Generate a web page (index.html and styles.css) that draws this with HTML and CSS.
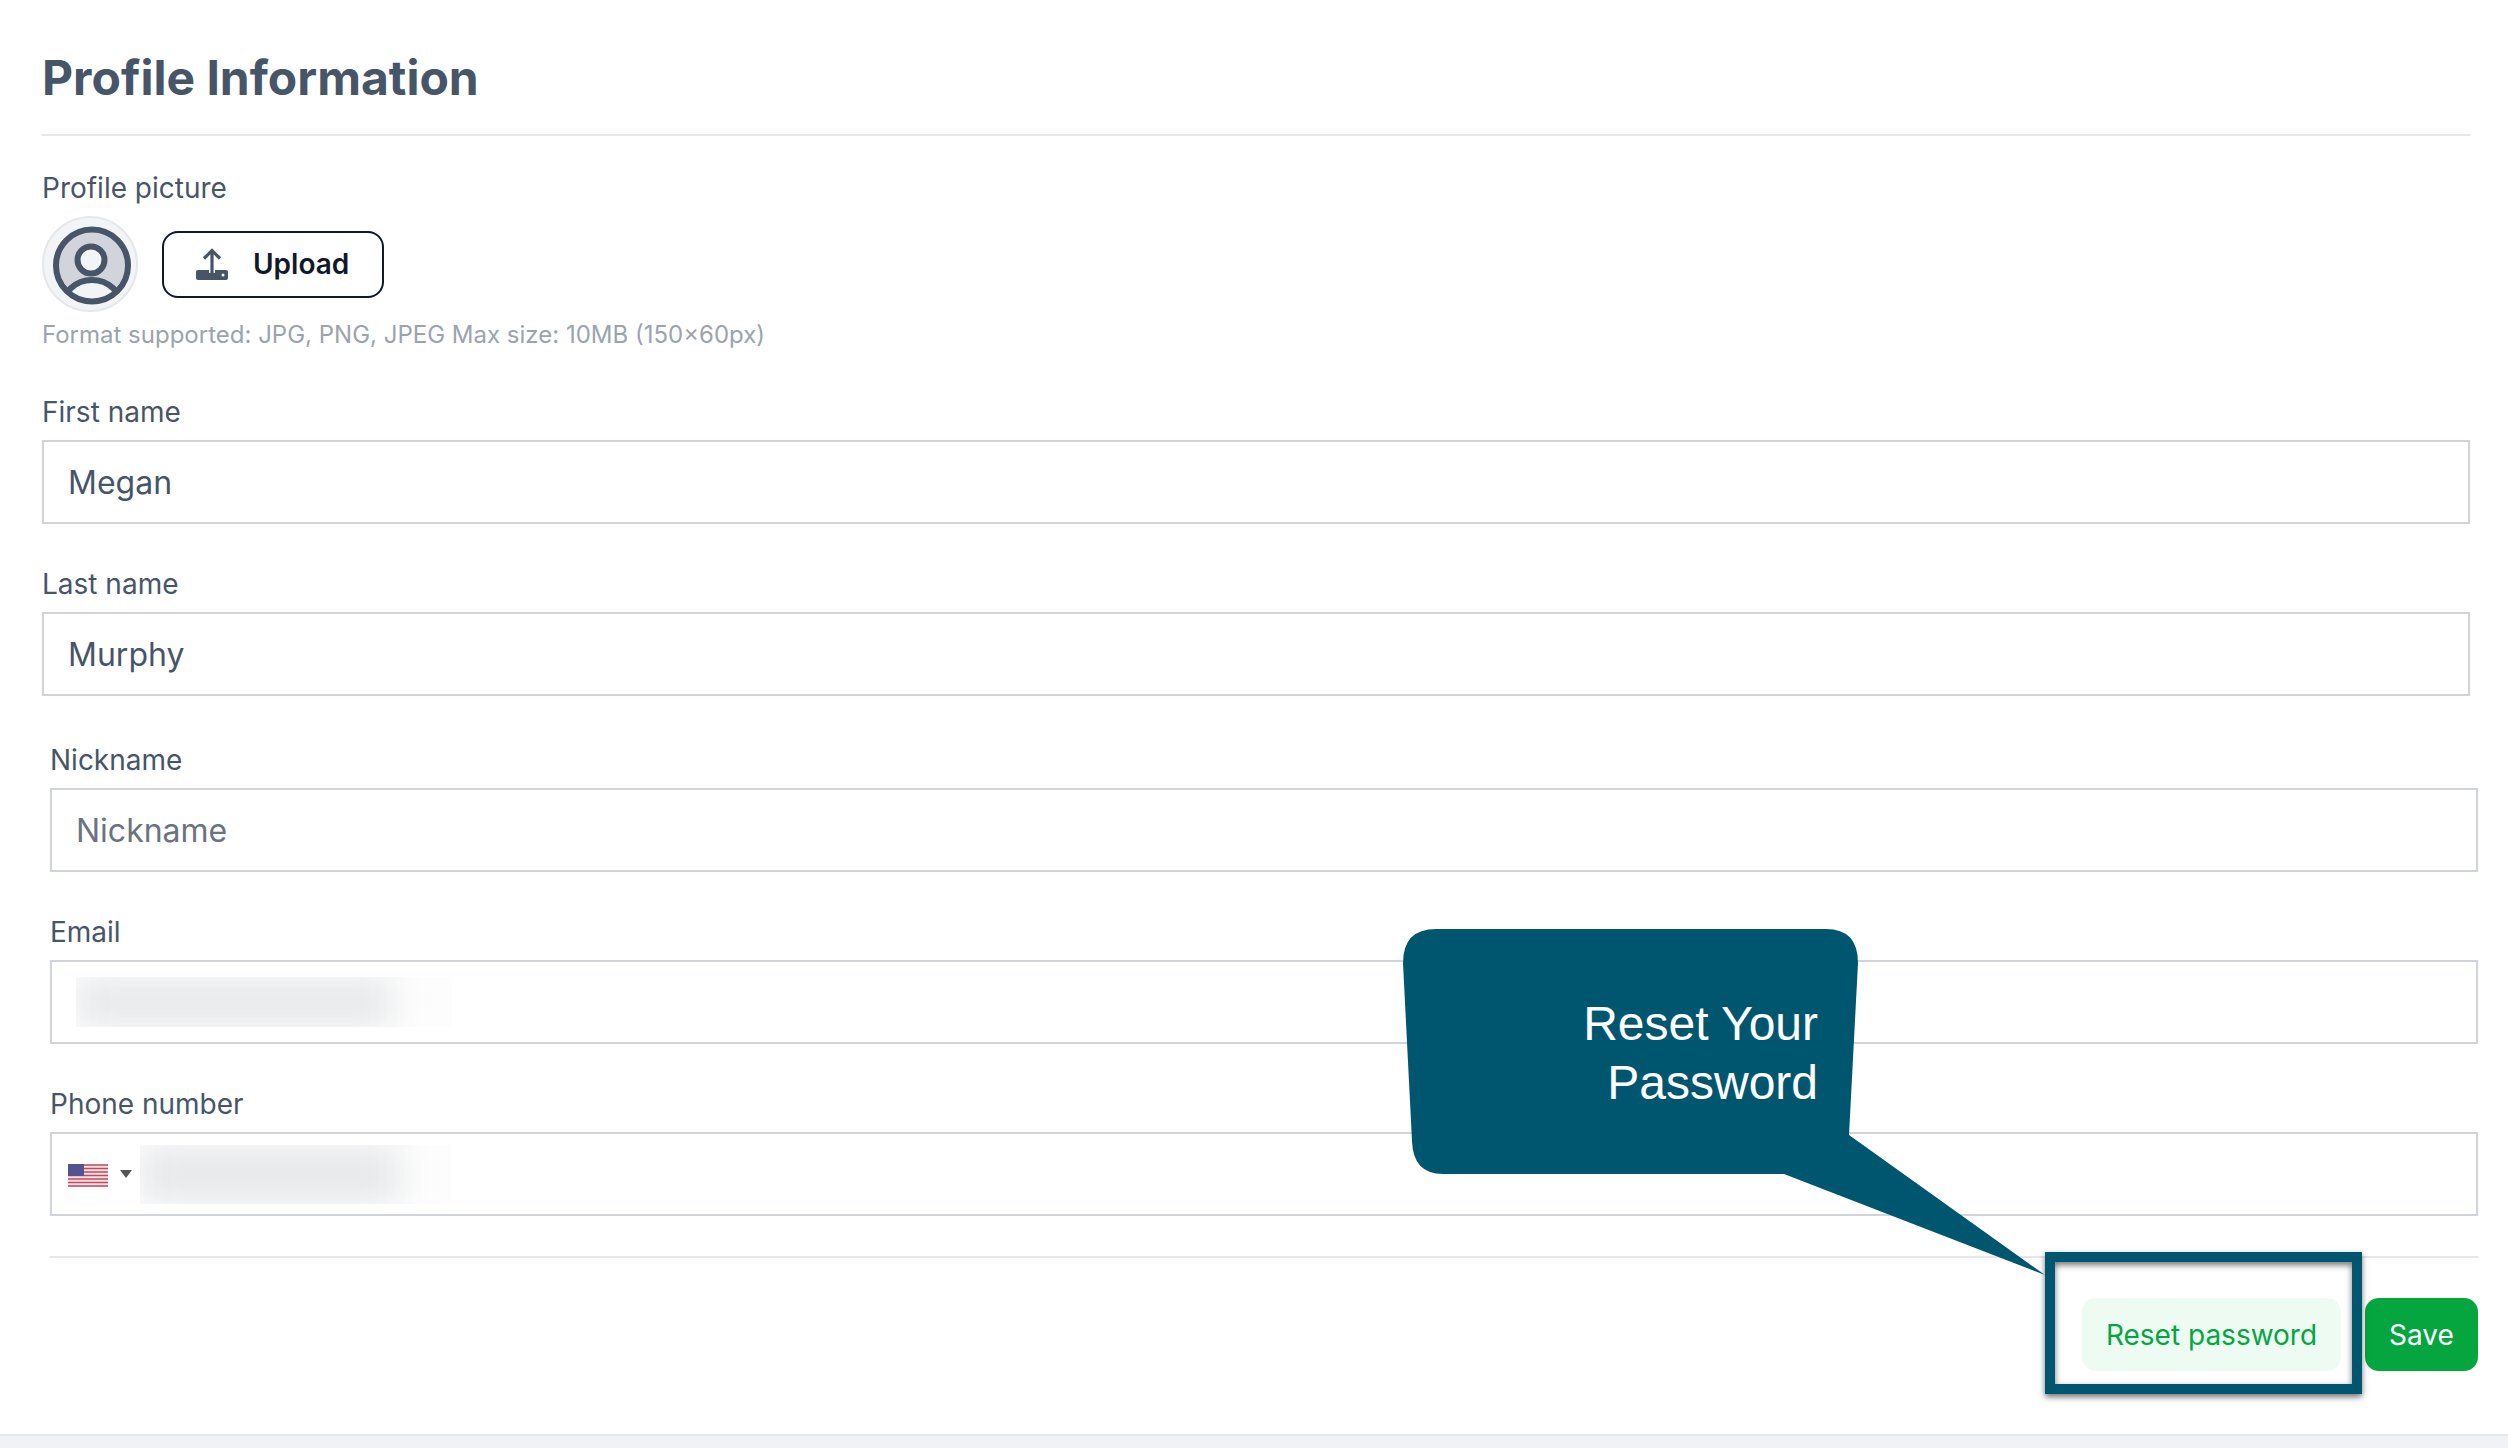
FILE: index.html
```html
<!DOCTYPE html>
<html lang="en">
<head>
    <meta charset="UTF-8">
    <meta name="viewport" content="width=device-width, initial-scale=1.0">
    <title>Profile Information</title>
    <link rel="stylesheet" href="styles.css">
</head>
<body>
    <div id="page">
        <!-- Top half -->
        <section class="block block-top">
            <h1 class="title">Profile Information</h1>
            <div class="label pic-label">Profile picture</div>
            <div class="pic-row">
                <div class="avatar">
                    <svg width="96" height="96" viewBox="0 0 96 96">
                        <defs>
                            <clipPath id="avatar-clip"><circle cx="50" cy="49.500" r="36"/></clipPath>
                        </defs>
                        <circle cx="48" cy="48" r="47" fill="#f3f4f6" stroke="#e5e7eb" stroke-width="2"/>
                        <circle cx="50" cy="49.500" r="36" fill="#d1d5db"/>
                        <g clip-path="url(#avatar-clip)">
                            <ellipse cx="50" cy="92" rx="30" ry="28" fill="#f3f4f6" stroke="#475569" stroke-width="6"/>
                        </g>
                        <circle cx="49" cy="44" r="13.500" fill="#f3f4f6" stroke="#475569" stroke-width="6"/>
                        <circle cx="50" cy="49.500" r="36" fill="none" stroke="#475569" stroke-width="6"/>
                    </svg>
                </div>
                <button class="upload-btn" type="button">
                    <svg width="32" height="32" viewBox="0 0 32 32">
                        <rect x="0" y="22" width="32" height="10" rx="2" fill="#475569"/>
                        <circle cx="27" cy="27" r="1.500" fill="#fff"/>
                        <path d="M16 3V25" fill="none" stroke="#fff" stroke-width="6"/>
                        <path d="M16 3V25M8 10.500L16 2.500L24 10.500" fill="none" stroke="#475569" stroke-width="3.200"/>
                    </svg>
                    <span>Upload</span>
                </button>
            </div>
            <p class="hint">Format supported: JPG, PNG, JPEG Max size: 10MB (150×60px)</p>

            <div class="field field-first">
                <label class="label">First name</label>
                <div class="input">Megan</div>
            </div>
            <div class="field field-last">
                <label class="label">Last name</label>
                <div class="input">Murphy</div>
            </div>
        </section>

        <!-- Bottom half, sits a few pixels further right -->
        <section class="block block-bottom">
            <div class="field field-nick">
                <label class="label">Nickname</label>
                <div class="input placeholder">Nickname</div>
            </div>
            <div class="field field-email">
                <label class="label">Email</label>
                <div class="input">
                    <div class="redact redact-email"><div class="smudge"></div></div>
                </div>
            </div>
            <div class="field field-phone">
                <label class="label">Phone number</label>
                <div class="input input-phone">
                    <svg class="flag" width="40" height="23" viewBox="0 0 40 23">
                        <rect width="40" height="23" fill="#f3e6e8"/>
                        <path d="M0 1H40M0 4.500H40M0 8H40M0 11.500H40M0 15H40M0 18.500H40M0 22H40" stroke="#c8475a" stroke-width="1.700"/>
                        <rect width="16" height="12" fill="#55538f"/>
                    </svg>
                    <span class="caret"></span>
                    <div class="redact redact-phone"><div class="smudge"></div></div>
                </div>
            </div>
            <div class="actions">
                <button class="btn btn-reset" type="button">Reset password</button>
                <button class="btn btn-save" type="button">Save</button>
            </div>
        </section>

        <div class="footer-band"></div>

        <!-- Annotation on top of the form -->
        <div class="highlight"></div>
        <div class="callout">
            <svg width="660" height="360" viewBox="0 0 660 360">
                <path d="M33 0H423Q455 0 455 34L446 206L642 346L381 245H40Q10 245 9 212L0 34Q0 0 33 0Z" fill="#00566f"/>
            </svg>
            <div class="callout-text">Reset Your<br>Password</div>
        </div>
    </div>
</body>
</html>
```

FILE: styles.css
```css
/* Global */
* {
    box-sizing: border-box;
}

body {
    margin: 0;
    background: #fff;
    font-family: 'Inter', 'Liberation Sans', sans-serif;
    color: #475569;
}

#page {
    position: relative;
    width: 2508px;
    height: 1448px;
    overflow: hidden;
    display: flex;
    flex-direction: column;
}

.block-top {
    padding: 0 38px 0 42px;
}

.block-bottom {
    padding: 0 30px 0 50px;
}

.title {
    margin: 0;
    height: 136px;
    padding-top: 50px;
    border-bottom: 2px solid #e5e7eb;
    font-size: 48px;
    line-height: 56px;
    font-weight: 700;
    color: #475569;
}

.label {
    display: block;
    font-size: 28px;
    line-height: 36px;
    color: #475569;
}

.pic-label {
    margin-top: 34px;
}

.pic-row {
    display: flex;
    align-items: center;
    gap: 24px;
    margin-top: 10px;
}

.avatar {
    width: 96px;
    height: 96px;
}

.avatar svg {
    display: block;
}

.upload-btn {
    display: flex;
    align-items: center;
    gap: 25px;
    width: 222px;
    height: 67px;
    padding: 0 0 0 32px;
    background: #fff;
    border: 2px solid #111827;
    border-radius: 16px;
    font-family: inherit;
    font-size: 28px;
    font-weight: 600;
    color: #111827;
}

.hint {
    margin: 8px 0 0;
    font-size: 24px;
    line-height: 30px;
    color: #9ca3af;
}

.field {
    display: flex;
    flex-direction: column;
    gap: 10px;
}

.field-first { margin-top: 44px; }
.field-last { margin-top: 42px; }
.field-nick { margin-top: 46px; }
.field-email { margin-top: 42px; }
.field-phone { margin-top: 42px; }

.input {
    display: flex;
    align-items: center;
    height: 84px;
    padding: 0 24px;
    border: 2px solid #d1d5db;
    font-size: 32px;
    color: #475569;
}

.placeholder {
    color: #6b7280;
}

/* Blurred-out values */
.redact {
    overflow: hidden;
    background: #fdfdfd;
}

.redact-email {
    width: 376px;
    height: 50px;
}

.redact-phone {
    width: 310px;
    height: 59px;
    margin-left: 8px;
}

.smudge {
    width: 84%;
    height: 100%;
    background: #e8e9eb;
    filter: blur(16px);
}

.input-phone {
    padding: 0 0 0 16px;
}

.flag {
    margin-top: 2px;
}

.caret {
    width: 0;
    height: 0;
    margin-left: 12px;
    border-left: 6px solid transparent;
    border-right: 6px solid transparent;
    border-top: 8px solid #555;
}

.actions {
    display: flex;
    justify-content: flex-end;
    gap: 24px;
    margin-top: 40px;
    padding-top: 40px;
    border-top: 2px solid #e5e7eb;
}

.btn {
    height: 73px;
    border: none;
    border-radius: 14px;
    font-family: inherit;
    font-size: 28px;
}

.btn-reset {
    width: 259px;
    background: #edfbf3;
    color: #05a640;
}

.btn-save {
    width: 113px;
    background: #05a640;
    color: #fff;
}

.footer-band {
    margin-top: auto;
    height: 14px;
    background: #f1f2f5;
    border-top: 2px solid #e5e7eb;
}

/* Annotation */
.highlight {
    position: absolute;
    left: 2045px;
    top: 1252px;
    width: 317px;
    height: 142px;
    border: 10px solid #00566f;
    box-shadow: 0 3px 6px rgba(0, 0, 0, 0.55), inset 0 3px 6px rgba(0, 0, 0, 0.55);
}

.callout {
    position: absolute;
    left: 1403px;
    top: 929px;
    width: 660px;
    height: 360px;
}

.callout svg {
    display: block;
}

.callout-text {
    position: absolute;
    right: 245px;
    top: 65px;
    font-family: 'Liberation Sans', Arial, sans-serif;
    font-size: 48px;
    line-height: 59px;
    text-align: right;
    color: #fff;
}
```
